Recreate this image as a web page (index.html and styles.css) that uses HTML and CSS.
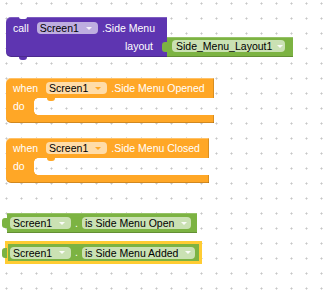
FILE: index.html
```html
<!DOCTYPE html>
<html>
<head>
  <title>Blocks</title>
  <link rel="stylesheet" href="styles.css">
</head>
<body>
  <div class="workspace">
    <svg class="grid" width="331" height="293">
      <defs>
        <pattern id="dots" width="15" height="15" patternUnits="userSpaceOnUse">
          <rect x="5" y="3" width="3" height="1" fill="#dddddd"/>
          <rect x="6" y="2" width="1" height="3" fill="#dddddd"/>
          <rect x="6" y="3" width="1" height="1" fill="#c6c6c6"/>
        </pattern>
      </defs>
      <rect width="331" height="293" fill="url(#dots)"/>
    </svg>

    <!-- call Screen1.Side Menu -->
    <div class="group call-group">
      <div class="block method">
        <div class="row head-row">
          <span class="label lead">call</span>
          <span class="field">Screen1<i class="arrow"></i></span>
          <span class="label">.Side Menu</span>
        </div>
        <div class="row arg-row">
          <span class="label">layout</span>
        </div>
      </div>
      <div class="value plugged">
        <span class="field">Side_Menu_Layout1<i class="arrow"></i></span>
      </div>
    </div>

    <!-- when Screen1.Side Menu Opened -->
    <div class="event opened">
      <div class="event-head">
        <span class="label lead">when</span>
        <span class="field">Screen1<i class="arrow"></i></span>
        <span class="label">.Side Menu Opened</span>
      </div>
      <div class="event-body">
        <div class="spine"><span class="label">do</span></div>
        <div class="slot"></div>
      </div>
      <div class="event-foot"></div>
    </div>

    <!-- when Screen1.Side Menu Closed -->
    <div class="event closed">
      <div class="event-head">
        <span class="label lead">when</span>
        <span class="field">Screen1<i class="arrow"></i></span>
        <span class="label">.Side Menu Closed</span>
      </div>
      <div class="event-body">
        <div class="spine"><span class="label">do</span></div>
        <div class="slot"></div>
      </div>
      <div class="event-foot"></div>
    </div>

    <!-- getters -->
    <div class="value getter is-open">
      <span class="field">Screen1<i class="arrow"></i></span>
      <span class="label dot">.</span>
      <span class="field">is Side Menu Open<i class="arrow"></i></span>
    </div>

    <div class="value getter is-added selected">
      <span class="field">Screen1<i class="arrow"></i></span>
      <span class="label dot">.</span>
      <span class="field">is Side Menu Added<i class="arrow"></i></span>
    </div>
  </div>
</body>
</html>
```

FILE: styles.css
```css
:root {
  --method-color: #5e35b1;
  --event-color: #ffa726;
  --getter-color: #7cb342;
  --selected-color: #ffcc33;
  --field-fill: rgba(255, 255, 255, 0.6);
}

body {
  margin: 0;
  font-family: 'Liberation Sans', Arial, sans-serif;
  font-size: 10.5px;
  background-color: #ffffff;
}

.workspace {
  position: relative;
  width: 331px;
  height: 293px;
  overflow: hidden;
  background-color: #ffffff;
}

.grid {
  position: absolute;
  left: 0;
  top: 0;
}

.label {
  color: #ffffff;
  white-space: nowrap;
  line-height: 13px;
}

.label.lead {
  margin-right: 8px;
}

.field {
  display: inline-flex;
  align-items: center;
  height: 12px;
  line-height: 12px;
  padding: 0 6px 0 3px;
  border-radius: 4px;
  background-color: var(--field-fill);
  color: #000000;
  white-space: nowrap;
  margin-right: 4px;
}

.arrow {
  display: inline-block;
  width: 0;
  height: 0;
  margin-left: 7px;
  border-left: 3px solid transparent;
  border-right: 3px solid transparent;
  border-top: 3px solid rgba(255, 255, 255, 0.9);
}

/* call block */

.group {
  position: absolute;
}

.call-group {
  left: 6px;
  top: 17px;
  display: flex;
  align-items: flex-end;
}

.method {
  position: relative;
  width: 161px;
  height: 40px;
  background-color: var(--method-color);
  border-radius: 5px 0 0 5px;
  box-shadow: inset 0 1px 0 rgba(255, 255, 255, 0.2), inset 0 -1px 0 rgba(0, 0, 0, 0.2);
}

/* previous connection notch */
.method::before {
  content: "";
  position: absolute;
  left: 13px;
  top: 0;
  width: 8px;
  height: 2px;
  border-radius: 0 0 3px 3px;
  background-color: #ffffff;
}

/* next connection tab */
.method::after {
  content: "";
  position: absolute;
  left: 13px;
  bottom: -3px;
  width: 8px;
  height: 3px;
  border-radius: 0 0 3px 3px;
  background-color: var(--method-color);
}

.method .field .arrow {
  border-top-color: rgba(255, 255, 255, 0.85);
}

.row {
  display: flex;
  align-items: center;
}

.head-row {
  height: 22px;
  padding-left: 7px;
}

.arg-row {
  height: 18px;
  padding-bottom: 4px;
  justify-content: flex-end;
  padding-right: 14px;
  box-sizing: border-box;
}

/* value blocks */

.value {
  position: relative;
  display: flex;
  align-items: center;
  height: 20px;
  box-sizing: border-box;
  background-color: var(--getter-color);
  box-shadow: inset 0 1px 0 rgba(255, 255, 255, 0.2), inset 0 -1px 0 rgba(0, 0, 0, 0.2);
}

.value::before {
  content: "";
  position: absolute;
  left: -5px;
  top: 5px;
  width: 5px;
  height: 10px;
  border-radius: 3px 0 0 3px;
  background-color: var(--getter-color);
}

.value .field .arrow {
  border-top-color: rgba(255, 255, 255, 0.9);
}

.plugged {
  width: 126px;
  padding: 0 0 2px 5px;
}

.plugged .field {
  padding: 0 2px 0 4px;
}

.plugged .arrow {
  margin-left: 5px;
}

.getter {
  position: absolute;
  left: 7px;
  padding-left: 3px;
}

.getter .dot {
  margin-right: 4px;
}

.getter .field + .dot + .field {
  padding-right: 4px;
}

.is-open {
  top: 213px;
  width: 190px;
}

.is-added {
  top: 243px;
  width: 193px;
  height: 19px;
}

.selected {
  box-shadow: 0 0 0 2px var(--selected-color), inset 0 0 0 1px var(--selected-color);
}

.selected::after {
  content: "";
  position: absolute;
  left: -7px;
  top: 3px;
  width: 7px;
  height: 14px;
  border-radius: 4px 0 0 4px;
  background-color: var(--selected-color);
  z-index: -1;
}

/* event blocks */

.event {
  position: absolute;
  left: 6px;
}

.opened {
  top: 78px;
  width: 208px;
}

.closed {
  top: 138px;
  width: 203px;
}

.event-head {
  display: flex;
  align-items: center;
  height: 20px;
  padding-left: 7px;
  background-color: var(--event-color);
  border-radius: 5px 0 0 0;
  box-shadow: inset 0 1px 0 rgba(255, 255, 255, 0.3), inset -1px 0 0 rgba(0, 0, 0, 0.15);
}

.event-head .field .arrow {
  border-top-color: var(--event-color);
}

.event-body {
  display: flex;
  height: 17px;
}

.spine {
  display: flex;
  align-items: center;
  width: 28px;
  padding-left: 7px;
  box-sizing: border-box;
  background-color: var(--event-color);
}

.slot {
  position: relative;
  flex: 1;
}

/* rounded inner corners of the statement slot */
.slot::before {
  content: "";
  position: absolute;
  left: 0;
  top: 0;
  width: 4px;
  height: 17px;
  background:
    radial-gradient(circle at 100% 100%, transparent 3.5px, var(--event-color) 4px) left top / 4px 4px no-repeat,
    radial-gradient(circle at 100% 0, transparent 3.5px, var(--event-color) 4px) left bottom / 4px 4px no-repeat;
}

/* next connection tab hanging into the slot */
.slot::after {
  content: "";
  position: absolute;
  left: 13px;
  top: 0;
  width: 8px;
  height: 3px;
  border-radius: 0 0 3px 3px;
  background-color: var(--event-color);
}

.event-foot {
  height: 8px;
  background-color: var(--event-color);
  border-radius: 0 0 0 5px;
  box-shadow: inset 0 -1px 0 rgba(0, 0, 0, 0.18), inset -1px 0 0 rgba(0, 0, 0, 0.15);
}
```
